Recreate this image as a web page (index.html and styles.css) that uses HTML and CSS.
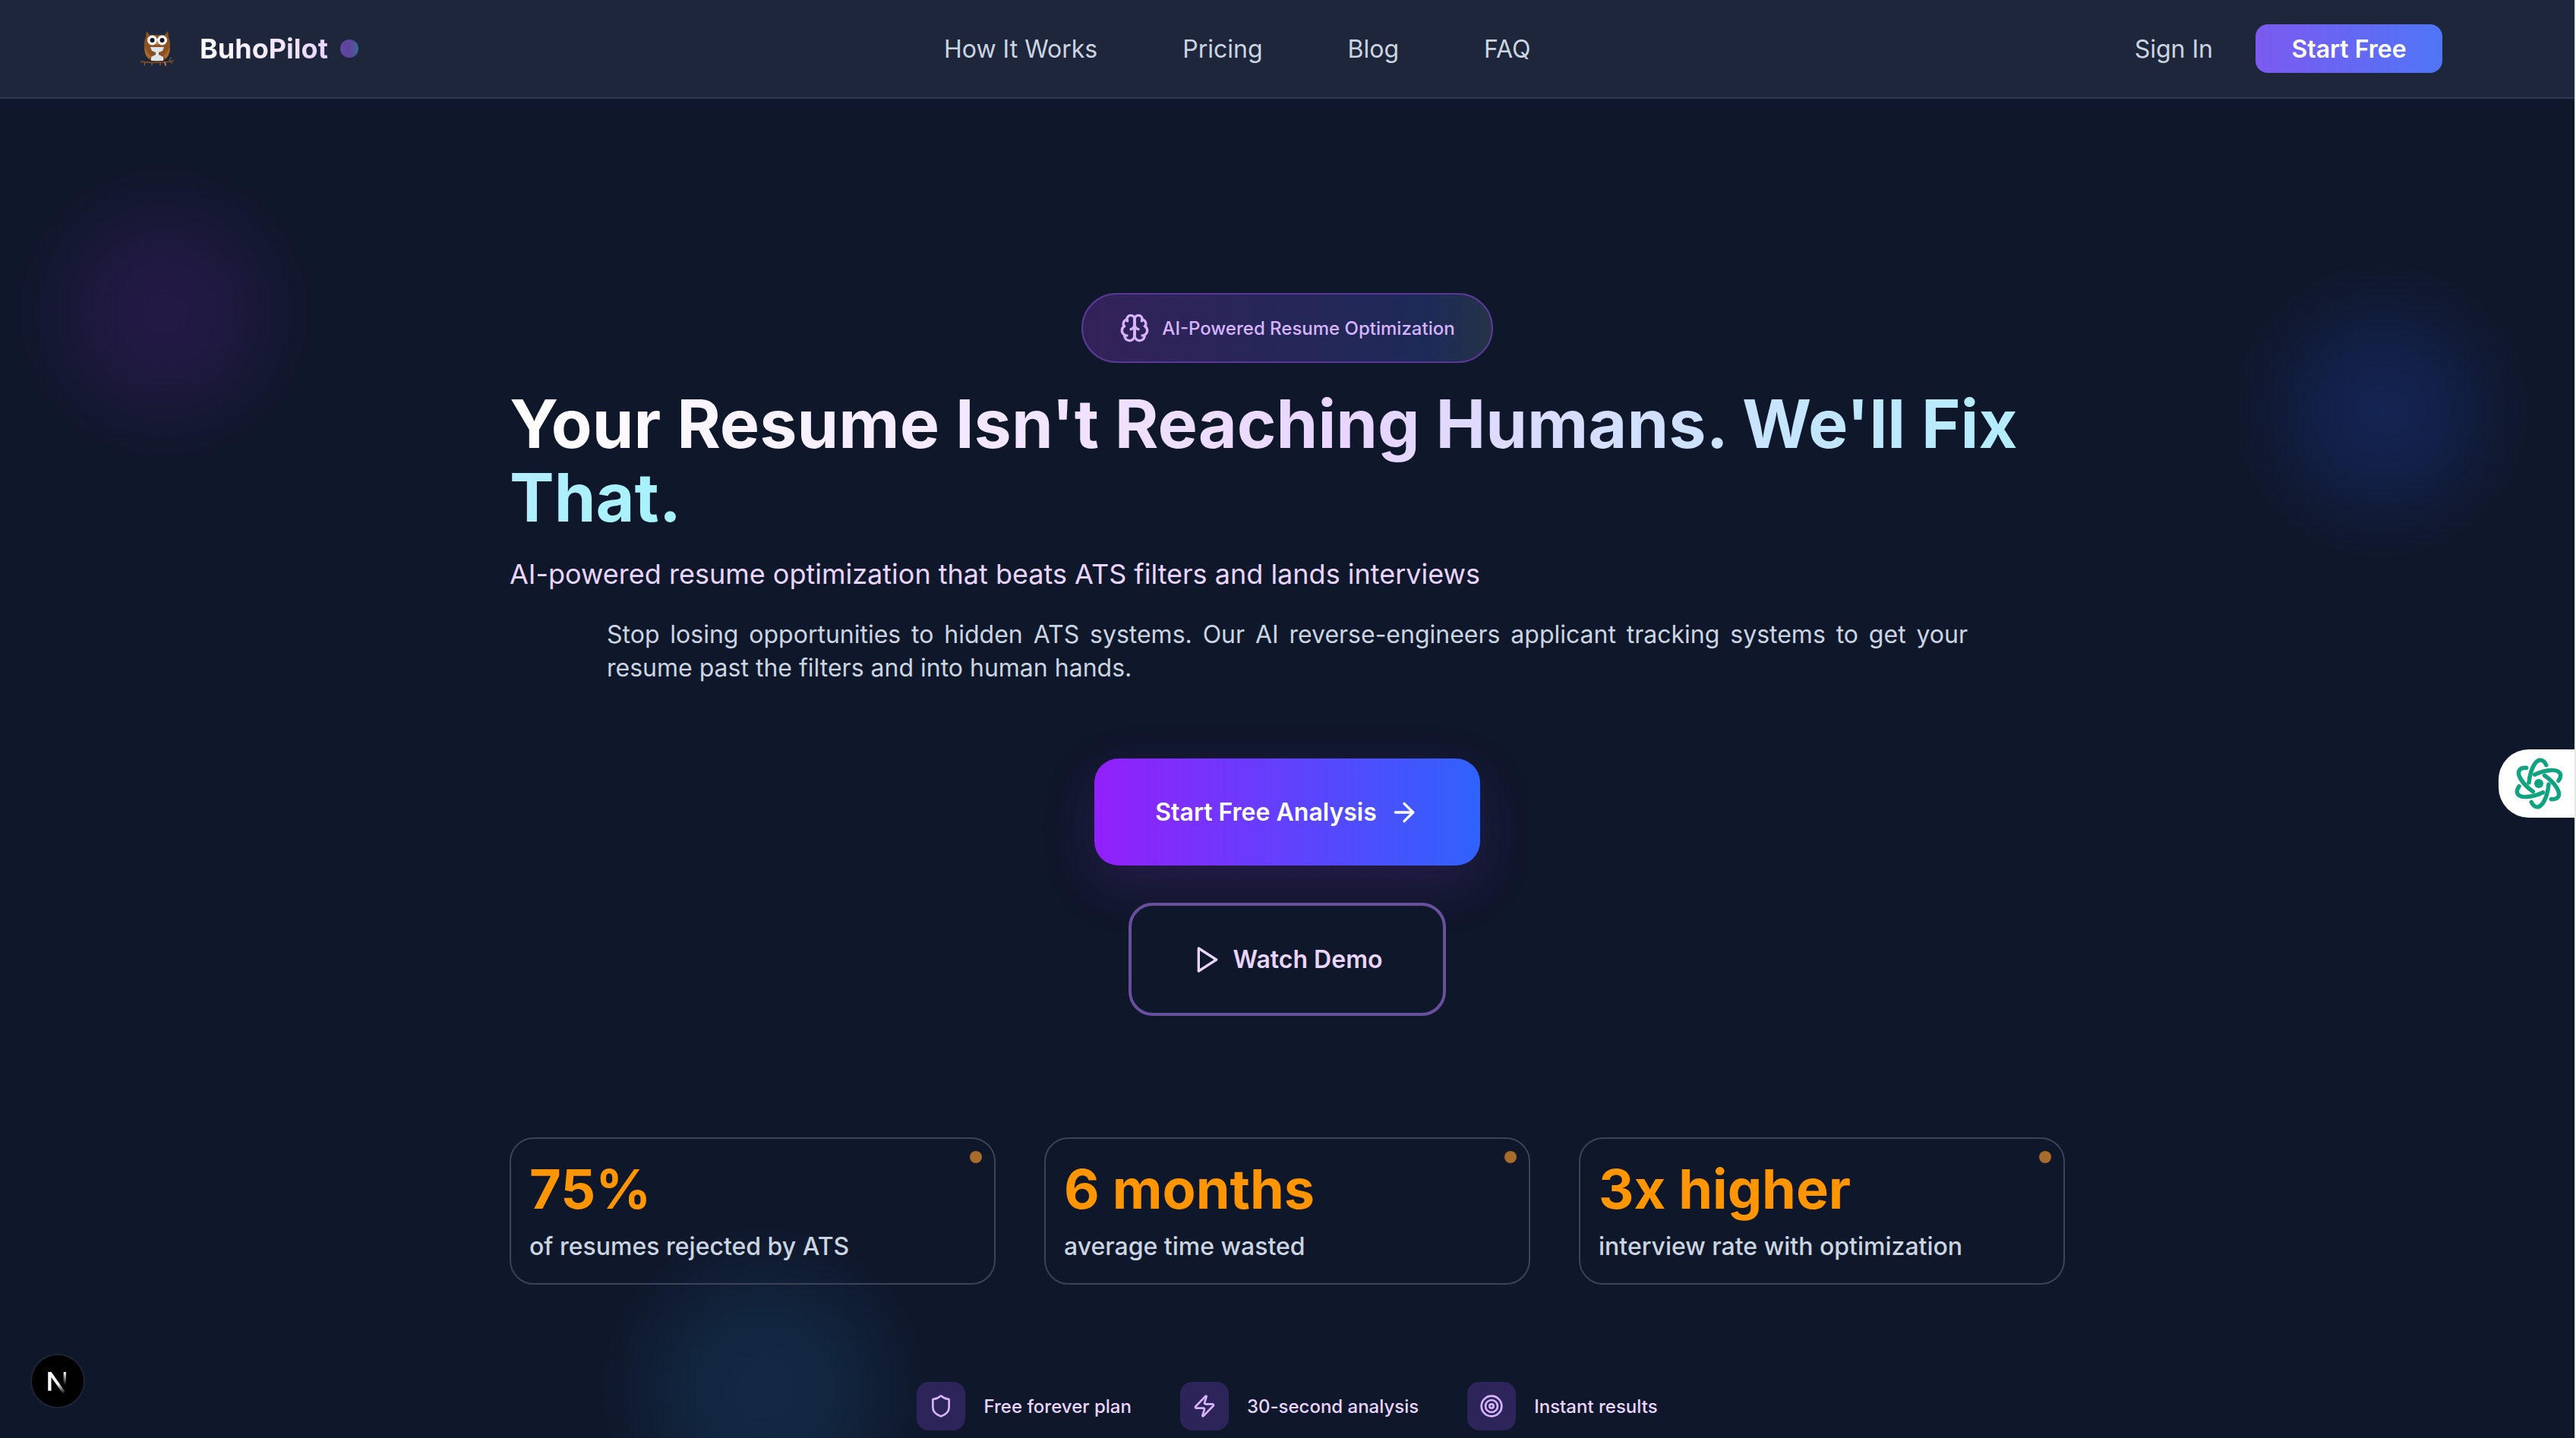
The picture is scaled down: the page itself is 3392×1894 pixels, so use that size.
FILE: index.html
```html
<!DOCTYPE html>
<html lang="en">
<head>
<meta charset="utf-8">
<title>BuhoPilot</title>
<link rel="stylesheet" href="styles.css">
</head>
<body>
<div class="glows">
  <div class="glow glow-purple"></div>
  <div class="glow glow-blue"></div>
  <div class="glow glow-teal"></div>
</div>

<header class="topbar">
  <a class="brand">
    <svg class="owl" viewBox="0 0 44 48" aria-hidden="true">
      <path d="M8 1l4 5h20l4-5 1 8c2 4 2 7 2 11 0 3 0 7-1 10-2 7-8 11-16 11S8 37 6 30c-1-3-1-7-1-10 0-4 0-7 2-11z" fill="#8a5222"/>
      <path d="M6 22c2 5 4 9 8 12l-3 3c-4-3-6-9-5-15zM38 22c-2 5-4 9-8 12l3 3c4-3 6-9 5-15z" fill="#a9682c"/>
      <circle cx="15.500" cy="13" r="6.500" fill="#f2f4f8"/><circle cx="28.500" cy="13" r="6.500" fill="#f2f4f8"/>
      <circle cx="15.500" cy="13" r="3" fill="#14141c"/><circle cx="28.500" cy="13" r="3" fill="#14141c"/>
      <path d="M22 15l-2 2.500 2 2.500 2-2.500z" fill="#c98530"/>
      <path d="M13 22h18l-2 5-5 2v3l6 3v5H14v-5l6-3v-3l-5-2z" fill="#dfe3ea"/>
      <path d="M1 41c10 2 32 2 42-1" fill="none" stroke="#7a4a24" stroke-width="1.800" stroke-linecap="round"/>
      <path d="M6 42l-1 4M15 43v3M26 43v3" stroke="#6a5a4a" stroke-width="1.500" stroke-linecap="round"/>
      <path d="M32 42l1 4" stroke="#c9742a" stroke-width="2" stroke-linecap="round"/>
      <path d="M39 41l3 2M38 40l2-4" stroke="#7a5a3a" stroke-width="1.200" stroke-linecap="round"/>
    </svg>
    <span class="brand-name">BuhoPilot</span>
    <span class="brand-dot"></span>
  </a>
  <nav class="nav">
    <a>How It Works</a>
    <a>Pricing</a>
    <a>Blog</a>
    <a>FAQ</a>
  </nav>
  <div class="actions">
    <a class="signin">Sign In</a>
    <a class="start">Start Free</a>
  </div>
</header>

<main class="hero">
  <div class="badge">
    <svg class="badge-icon" viewBox="0 0 24 24" fill="none" stroke="currentColor" stroke-width="2" stroke-linecap="round" stroke-linejoin="round" aria-hidden="true">
      <path d="M12 5a3 3 0 1 0-5.997.125 4 4 0 0 0-2.526 5.77 4 4 0 0 0 .556 6.588A4 4 0 1 0 12 18Z"/>
      <path d="M12 5a3 3 0 1 1 5.997.125 4 4 0 0 1 2.526 5.77 4 4 0 0 1-.556 6.588A4 4 0 1 1 12 18Z"/>
      <path d="M15 13a4.500 4.500 0 0 1-3-4 4.500 4.500 0 0 1-3 4"/>
      <path d="M12 5v13"/>
      <path d="M17.599 6.500a3 3 0 0 0 .399-1.375"/><path d="M6.003 5.125A3 3 0 0 0 6.401 6.500"/>
      <path d="M3.477 10.896a4 4 0 0 1 .585-.396"/><path d="M19.938 10.500a4 4 0 0 1 .585.396"/>
      <path d="M6 18a4 4 0 0 1-1.967-.516"/><path d="M19.967 17.484A4 4 0 0 1 18 18"/>
    </svg>
    <span>AI-Powered Resume Optimization</span>
  </div>

  <h1 class="title"><span class="title-grad">Your Resume Isn't Reaching Humans. We'll Fix That.</span></h1>
  <p class="subtitle">AI-powered resume optimization that beats ATS filters and lands interviews</p>
  <p class="lede">Stop losing opportunities to hidden ATS systems. Our AI reverse-engineers applicant tracking systems to get your resume past the filters and into human hands.</p>

  <div class="cta">
    <a class="btn-primary">
      <span>Start Free Analysis</span>
      <svg class="btn-icon" viewBox="0 0 24 24" fill="none" stroke="currentColor" stroke-width="2" stroke-linecap="round" stroke-linejoin="round" aria-hidden="true"><path d="M5 12h14"/><path d="m12 5 7 7-7 7"/></svg>
    </a>
    <a class="btn-ghost">
      <svg class="btn-icon" viewBox="0 0 24 24" fill="none" stroke="currentColor" stroke-width="2" stroke-linecap="round" stroke-linejoin="round" aria-hidden="true"><polygon points="5 3 19 12 5 21 5 3"/></svg>
      <span>Watch Demo</span>
    </a>
  </div>

  <section class="stats">
    <div class="stat"><span class="stat-dot"></span><div class="stat-num">75%</div><div class="stat-label">of resumes rejected by ATS</div></div>
    <div class="stat"><span class="stat-dot"></span><div class="stat-num">6 months</div><div class="stat-label">average time wasted</div></div>
    <div class="stat"><span class="stat-dot"></span><div class="stat-num">3x higher</div><div class="stat-label">interview rate with optimization</div></div>
  </section>

  <section class="perks">
    <div class="perk">
      <span class="perk-icon"><svg viewBox="0 0 24 24" fill="none" stroke="currentColor" stroke-width="2" stroke-linecap="round" stroke-linejoin="round" aria-hidden="true"><path d="M20 13c0 5-3.500 7.500-7.660 8.950a1 1 0 0 1-.67-.01C7.500 20.500 4 18 4 13V6a1 1 0 0 1 1-1c2 0 4.500-1.200 6.240-2.720a1.170 1.170 0 0 1 1.520 0C14.510 3.810 17 5 19 5a1 1 0 0 1 1 1z"/></svg></span>
      <span>Free forever plan</span>
    </div>
    <div class="perk">
      <span class="perk-icon"><svg viewBox="0 0 24 24" fill="none" stroke="currentColor" stroke-width="2" stroke-linecap="round" stroke-linejoin="round" aria-hidden="true"><path d="M4 14a1 1 0 0 1-.78-1.630l9.900-10.200a.500.500 0 0 1 .860.460l-1.920 6.020A1 1 0 0 0 13 10h7a1 1 0 0 1 .780 1.630l-9.900 10.200a.500.500 0 0 1-.860-.460l1.920-6.020A1 1 0 0 0 11 14z"/></svg></span>
      <span>30-second analysis</span>
    </div>
    <div class="perk">
      <span class="perk-icon"><svg viewBox="0 0 24 24" fill="none" stroke="currentColor" stroke-width="2" stroke-linecap="round" stroke-linejoin="round" aria-hidden="true"><circle cx="12" cy="12" r="10"/><circle cx="12" cy="12" r="6"/><circle cx="12" cy="12" r="2"/></svg></span>
      <span>Instant results</span>
    </div>
  </section>
</main>

<aside class="assistant">
  <svg viewBox="0 0 70 70" fill="none" stroke="#10a37f" stroke-width="5.500" stroke-linecap="round" aria-hidden="true">
    <circle cx="35" cy="35" r="6" fill="#10a37f" stroke="none"/>
    <ellipse cx="35" cy="35" rx="31" ry="13" transform="rotate(95 35 35)" pathLength="100" stroke-dasharray="32 18" stroke-dashoffset="25"/>
    <ellipse cx="35" cy="35" rx="31" ry="13" transform="rotate(35 35 35)" pathLength="100" stroke-dasharray="32 18" stroke-dashoffset="25"/>
    <ellipse cx="35" cy="35" rx="31" ry="13" transform="rotate(155 35 35)" pathLength="100" stroke-dasharray="32 18" stroke-dashoffset="25"/>
  </svg>
</aside>

<div class="next-badge">
  <svg viewBox="0 0 40 40" aria-hidden="true">
    <defs>
      <linearGradient id="nfade" x1="0" y1="0" x2="1" y2="1"><stop offset=".55" stop-color="#fff"/><stop offset="1" stop-color="#fff" stop-opacity="0"/></linearGradient>
      <linearGradient id="nbar" x1="0" y1="0" x2="0" y2="1"><stop offset="0" stop-color="#fff"/><stop offset="1" stop-color="#fff" stop-opacity="0"/></linearGradient>
    </defs>
    <path d="M12.500 13H15l11 15.500-2 1L15 17v10.500h-2.500z" fill="url(#nfade)"/>
    <rect x="24.500" y="13" width="2" height="10" fill="url(#nbar)"/>
  </svg>
</div>
<div class="edge"></div>
</body>
</html>
```
FILE: styles.css
```css
* { box-sizing: border-box; }
html, body { margin: 0; height: 100%; }
html { overflow: hidden; }
body {
  position: relative;
  height: 1894px;
  padding-right: 2px;
  overflow: hidden;
  background: #0f172a;
  color: #fff;
  font-family: Inter, "Liberation Sans", sans-serif;
}

.glows { position: absolute; inset: 0; overflow: hidden; pointer-events: none; }
.glow { position: absolute; border-radius: 50%; }
.glow-purple {
  left: 20px; top: 216px; width: 392px; height: 392px;
  background: radial-gradient(circle, rgba(107,33,168,.22) 0%, rgba(107,33,168,.17) 30%, rgba(107,33,168,.06) 55%, rgba(107,33,168,0) 72%);
}
.glow-blue {
  left: 2940px; top: 345px; width: 392px; height: 392px;
  background: radial-gradient(circle, rgba(30,64,175,.3) 0%, rgba(30,64,175,.22) 30%, rgba(30,64,175,.07) 55%, rgba(30,64,175,0) 72%);
}
.glow-teal {
  left: 700px; top: 1560px; width: 612px; height: 334px;
  border-radius: 0;
  background: radial-gradient(circle 306px at 306px 270px, rgba(24,84,130,.3) 0%, rgba(24,84,130,.24) 30%, rgba(24,84,130,.09) 55%, rgba(24,84,130,0) 72%);
}

.topbar {
  position: relative;
  display: flex;
  justify-content: space-between;
  align-items: center;
  height: 130px;
  padding: 0 174px 0 176px;
  background: #1e263b;
  border-bottom: 2px solid #2a3850;
}
.brand { display: flex; align-items: center; margin-right: -24px; }
.owl { width: 44px; height: 48px; margin: 0 34px 0 9px; }
.brand-name {
  font-size: 36px; font-weight: 700;
  background: linear-gradient(90deg, #fff, #e9d5ff);
  -webkit-background-clip: text; background-clip: text; color: transparent;
}
.brand-dot {
  width: 24px; height: 24px; margin-left: 16px; border-radius: 50%;
  background: linear-gradient(90deg, #5f45a0 0%, #5f45a0 55%, #3a6a90 100%);
}
.nav { display: flex; gap: 112px; font-size: 32px; color: #cbd5e1; }
.actions { display: flex; align-items: center; gap: 56px; font-size: 32px; }
.signin { color: #cbd5e1; }
.start {
  display: flex; align-items: center; justify-content: center;
  width: 246px; height: 64px; border-radius: 16px;
  font-weight: 600; color: #fff;
  background: linear-gradient(90deg, #7c5af0, #4f75f6);
}

.hero {
  position: relative;
  display: flex; flex-direction: column; align-items: center;
  padding-top: 256px;
}
.badge {
  display: flex; align-items: center; gap: 16px;
  height: 92px; padding: 0 48px;
  border: 2px solid #5a3a96; border-radius: 46px;
  background: linear-gradient(90deg, #33225a, #1d2a58 85%, #263347);
  color: #d8b4fe; font-size: 24px; font-weight: 500;
}
.badge-icon { width: 40px; height: 40px; }

.title {
  width: 2048px; margin: 32px 0 0;
  font-size: 88px; line-height: 96.800px; font-weight: 700;
}
.title-grad {
  background: linear-gradient(90deg, #fff 0%, #e9d5ff 50%, #a5f3fc 100%);
  -webkit-background-clip: text; background-clip: text; color: transparent;
}
.subtitle {
  width: 2048px; margin: 28px 0 0;
  font-size: 36px; line-height: 48px; color: #e9d5ff;
}
.lede {
  width: 1792px; margin: 34px 0 0;
  font-size: 32px; line-height: 44.800px; color: #cbd5e1;
  text-align: justify;
}

.cta { display: flex; flex-direction: column; align-items: center; gap: 49px; margin-top: 96px; }
.btn-primary, .btn-ghost { display: flex; align-items: center; justify-content: center; font-size: 32px; font-weight: 600; }
.btn-primary {
  width: 508px; height: 141px; gap: 16px; border-radius: 32px; color: #fff;
  background: linear-gradient(90deg, #9320fb, #2f62fd);
  box-shadow: 0 24px 70px rgba(147,51,234,.18);
}
.btn-ghost {
  width: 418px; height: 149px; gap: 14px; border-radius: 32px; color: #e9d5ff;
  border: 4px solid #6a4f9e;
  background: #0f172a;
}
.btn-icon { width: 40px; height: 40px; }

.stats {
  display: grid; grid-template-columns: repeat(3, 1fr); gap: 64px;
  width: 2048px; margin-top: 160px;
}
.stat {
  position: relative; height: 194px; padding: 26px 24px 0;
  border: 2px solid #3a4358; border-radius: 32px;
}
.stat-dot {
  position: absolute; top: 16px; right: 16px;
  width: 16px; height: 16px; border-radius: 50%; background: #a96b2c;
}
.stat-num { font-size: 72px; line-height: 80px; font-weight: 700; color: #ff9500; }
.stat-label { margin-top: 12px; font-size: 32px; line-height: 48px; font-weight: 500; color: #cbd5e1; }

.perks { display: flex; gap: 64px; margin-top: 128px; }
.perk { display: flex; align-items: center; gap: 24px; font-size: 24px; font-weight: 500; color: #e9d5ff; }
.perk-icon {
  display: flex; align-items: center; justify-content: center;
  width: 64px; height: 64px; border-radius: 16px;
  background: #2d2459; color: #d8b4fe;
}
.perk-icon svg { width: 32px; height: 32px; }

.assistant {
  position: absolute; right: 2px; top: 987px;
  display: flex; align-items: center; padding-left: 18px;
  width: 100px; height: 90px;
  background: #fff; border-radius: 40px 0 0 40px;
}
.assistant svg { width: 70px; height: 70px; flex: none; }

.next-badge {
  position: absolute; left: 40px; top: 1783px;
  width: 72px; height: 72px; border-radius: 50%;
  background: #000; border: 2px solid #1d2436;
}
.next-badge svg { display: block; width: 100%; height: 100%; }

.edge { position: absolute; top: 0; right: 0; bottom: 0; width: 2px; background: #e8e8e8; }
```
